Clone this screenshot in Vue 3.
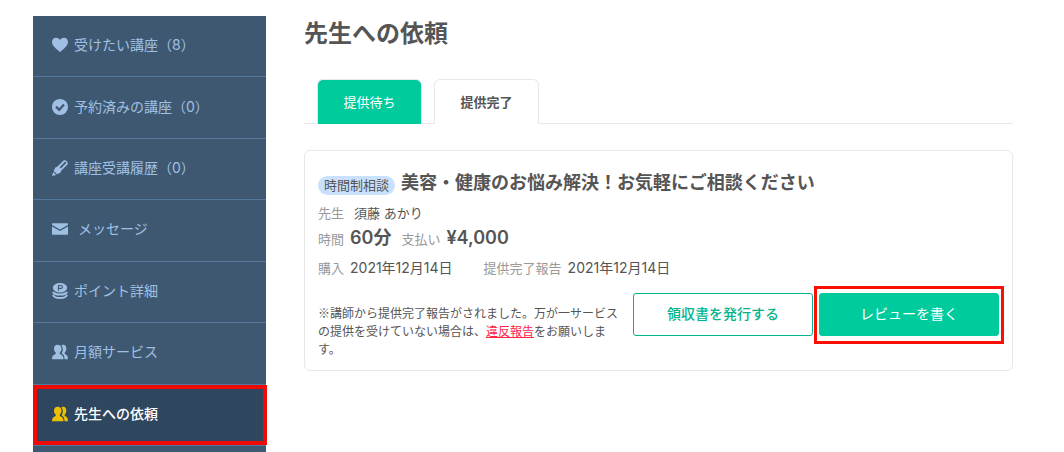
<script setup>
import { ref } from 'vue'

const items = [
  { icon: 'heart', label: '受けたい講座（8）' },
  { icon: 'check', label: '予約済みの講座（0）' },
  { icon: 'pen', label: '講座受講履歴（0）' },
  { icon: 'mail', label: 'メッセージ', wide: true },
  { icon: 'coins', label: 'ポイント詳細' },
  { icon: 'users', label: '月額サービス' },
  { icon: 'users', label: '先生への依頼', current: true }
]

const tabs = ['提供待ち', '提供完了']
const activeTab = ref('提供完了')
</script>

<template>
  <div class="page">
    <nav class="sidebar">
      <ul class="menu">
        <li v-for="item in items" :key="item.label" class="menu-item">
          <a
            href="#"
            class="menu-link"
            :class="{ current: item.current, wide: item.wide }"
            :aria-current="item.current ? 'page' : undefined"
          >
            <svg class="icon" viewBox="0 0 16 16" aria-hidden="true">
              <path
                v-if="item.icon === 'heart'"
                d="M8 15.2C6.8 13.4 0 9.4 0 4.9 0 2.4 1.8.8 4.1.8 5.8.8 7.2 1.7 8 3.1 8.8 1.7 10.2.8 11.9.8 14.2.8 16 2.4 16 4.9c0 4.500-6.800 8.500-8 10.300z"
              />
              <template v-else-if="item.icon === 'check'">
                <circle cx="8" cy="8" r="8" />
                <path class="cut" d="M4 7.600 7.200 10.800 12 5.600" stroke-width="2.200" />
              </template>
              <template v-else-if="item.icon === 'pen'">
                <path d="M0 16 1.200 11.900 4.200 14.900z" />
                <path
                  fill-rule="evenodd"
                  d="M1.700 11 3.300 7.500 5.200 6.700 11.300.8c2-1.900 5.900 1.900 3.900 3.900L9.200 10.800 8.400 12.800 5 14.300zM7.700 7.300 8.800 8.400 14 3.200c.5-.6-.6-1.700-1.200-1.200z"
                />
              </template>
              <template v-else-if="item.icon === 'mail'">
                <path d="M.8 2.200h14.400c.5 0 .8.3.8.8v.9L8 8.400 0 3.900V3c0-.5.3-.8.8-.8z" />
                <path d="M0 5.500 8 10l8-4.500v7.500c0 .5-.3.8-.8.8H.8c-.5 0-.8-.3-.8-.8z" />
              </template>
              <template v-else-if="item.icon === 'coins'">
                <ellipse cx="8" cy="4.800" rx="7.200" ry="4.800" />
                <path class="cut" d="M6.500 7.700V2.500H9c2 0 2 2.900 0 2.900H6.500" stroke-width="1.100" />
                <path class="line" d="M1 9c1.400 3.400 12.600 3.400 14 0M1 12c1.400 4 12.600 4 14 0" />
              </template>
              <template v-else>
                <path
                  d="M5.700.8C8 .8 9.500 2.300 9.500 4.800c0 1.700-.7 3-1.700 3.800v1.300c2 .9 3.500 1.200 3.800 5.300H0c.3-4.100 1.700-4.400 3.700-5.300V8.600C2.700 7.800 2 6.500 2 4.800c0-2.500 1.400-4 3.700-4z"
                />
                <path
                  d="M9.400 1.200c3-1.200 4.900.5 4.900 3.500 0 1.700-.7 3-1.600 3.900v1.300c1.900.8 3.200 1.400 3.300 5.300h-3.400c-.2-3.500-1.100-4.800-3-5.700 1.600-2.500 1.700-6.200-.2-8.300z"
                />
              </template>
            </svg>
            <span>{{ item.label }}</span>
          </a>
        </li>
      </ul>
    </nav>

    <main class="content">
      <h1 class="heading">先生への依頼</h1>

      <div class="tabs" role="tablist">
        <button
          v-for="tab in tabs"
          :key="tab"
          type="button"
          role="tab"
          class="tab"
          :class="{ active: tab === activeTab }"
          :aria-selected="tab === activeTab"
          @click="activeTab = tab"
        >
          {{ tab }}
        </button>
      </div>

      <article class="card">
        <header class="card-head">
          <span class="badge">時間制相談</span>
          <h2 class="title">美容・健康のお悩み解決！お気軽にご相談ください</h2>
        </header>
        <dl class="row teacher">
          <div class="pair"><dt>先生</dt><dd>須藤 あかり</dd></div>
        </dl>
        <dl class="row price">
          <div class="pair"><dt>時間</dt><dd>60分</dd></div>
          <div class="pair"><dt>支払い</dt><dd>¥4,000</dd></div>
        </dl>
        <dl class="row dates">
          <div class="pair"><dt>購入</dt><dd>2021年12月14日</dd></div>
          <div class="pair"><dt>提供完了報告</dt><dd>2021年12月14日</dd></div>
        </dl>
        <footer class="card-foot">
          <p class="note">※講師から提供完了報告がされました。万が一サービスの提供を受けていない場合は、<a href="#" class="report">違反報告</a>をお願いします。</p>
          <div class="actions">
            <button type="button" class="button outline">領収書を発行する</button>
            <button type="button" class="button solid">レビューを書く</button>
          </div>
        </footer>
      </article>
    </main>
  </div>
</template>

<style>
body {
  margin: 0;
  background: #fff;
}
</style>

<style scoped>
.page {
  display: flex;
  gap: 38px;
  box-sizing: border-box;
  min-height: 100vh;
  padding: 16px 51px 0 33px;
  color: #555;
  font-family: Inter, "Noto Sans CJK JP", sans-serif;
  font-size: 13px;
  line-height: 18px;
}

.sidebar {
  flex: 0 0 233px;
  background: #3e5871;
}

.menu {
  display: grid;
  grid-auto-rows: 1fr;
  min-height: 430px;
  margin: 0;
  padding: 0;
  list-style: none;
}

.menu-item {
  display: flex;
  border-bottom: 1px solid #53779d;
}

.menu-link {
  position: relative;
  display: flex;
  flex: 1;
  align-items: center;
  gap: 6px;
  padding: 0 19px 2px;
  color: #a0c0e3;
  font-size: 14px;
  line-height: 20px;
  text-decoration: none;
}

.menu-link.wide {
  gap: 10px;
}

.menu-link.current {
  background: #2f465f;
  color: #fff;
  font-weight: 500;
}

.menu-link.current::after {
  position: absolute;
  inset: 0 -1px 0 0;
  border: 4px solid #f00a06;
  content: "";
}

.icon {
  flex: none;
  width: 16px;
  height: 16px;
  fill: currentColor;
}

.current .icon {
  color: #edc004;
}

.cut {
  fill: none;
  stroke: #3e5871;
}

.line {
  fill: none;
  stroke: currentColor;
  stroke-width: 2;
}

.content {
  flex: 1;
  min-width: 0;
}

.heading {
  margin: 0;
  font-size: 24px;
  font-weight: 700;
  line-height: 36px;
}

.tabs {
  display: flex;
  gap: 12px;
  margin-top: 27px;
  padding: 0 13px;
  border-bottom: 1px solid #e8e8e8;
}

.tab {
  box-sizing: border-box;
  min-width: 105px;
  height: 45px;
  margin-bottom: -1px;
  padding: 0 24px;
  border: 1px solid #e8e8e8;
  border-bottom: 0;
  border-radius: 6px 6px 0 0;
  background: #00cb9c;
  color: #fff;
  font: inherit;
  cursor: pointer;
}

.tab.active {
  background: #fff;
  color: #555;
  font-weight: 700;
}

.card {
  margin-top: 26px;
  padding: 20px 13px 12px;
  border: 1px solid #e8e8e8;
  border-radius: 6px;
}

.card-head {
  display: flex;
  align-items: center;
  gap: 6px;
}

.badge {
  flex: none;
  margin-top: 4px;
  padding: 0 6px;
  border-radius: 10px;
  background: #c9e1fd;
  line-height: 19px;
}

.title {
  margin: 0;
  font-size: 18px;
  font-weight: 700;
  line-height: 24px;
}

.row {
  display: flex;
  margin: 0;
}

.pair {
  display: flex;
  align-items: baseline;
  gap: 6px;
}

.row dt {
  color: #999;
}

.row dd {
  margin: 0;
}

.teacher {
  margin-top: 9px;
}

.teacher .pair {
  gap: 10px;
}

.price {
  gap: 10px;
  margin-top: 5px;
}

.price dd {
  font-size: 18px;
  font-weight: 600;
  line-height: 22px;
}

.dates {
  gap: 31px;
  margin-top: 10px;
}

.dates dd {
  font-size: 14px;
}

.card-foot {
  display: flex;
  align-items: flex-start;
  gap: 14px;
  margin-top: 16px;
}

.note {
  flex: 1;
  margin: 0;
  padding-top: 11px;
  font-family: "Noto Sans CJK JP", sans-serif;
  font-size: 12px;
}

.report {
  color: #ff2448;
  text-decoration: underline;
}

.actions {
  display: flex;
  gap: 6px;
}

.button {
  position: relative;
  box-sizing: border-box;
  width: 180px;
  height: 43px;
  padding: 0 0 2px;
  border: 1px solid #00b48b;
  border-radius: 3px;
  font: inherit;
  font-size: 14px;
  cursor: pointer;
}

.outline {
  background: #fff;
  color: #00b48b;
  font-weight: 500;
}

.solid {
  border-color: #00cb9c;
  background: #00cb9c;
  color: #fff;
}

.solid::after {
  position: absolute;
  inset: -8px -6px -9px;
  border: 3px solid #fb0f05;
  content: "";
}
</style>
